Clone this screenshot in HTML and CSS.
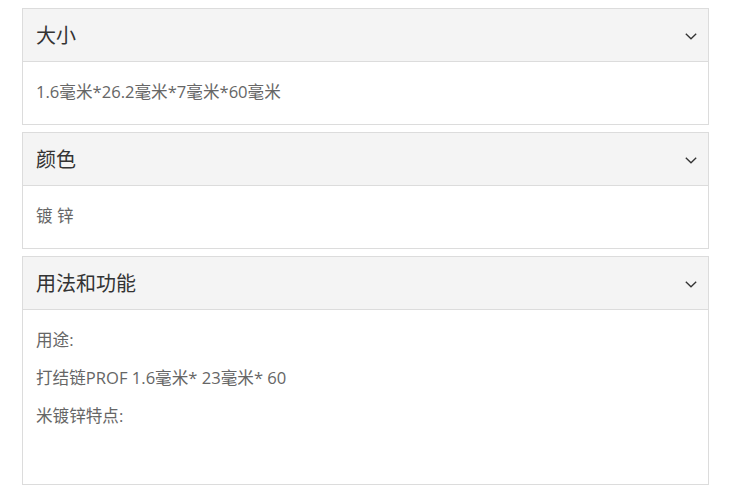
FILE: index.html
```html
<!DOCTYPE html>
<html lang="zh-CN">
<head>
<meta charset="utf-8">
<title>产品参数</title>
<link rel="stylesheet" href="styles.css">
</head>
<body>
<div class="accordion">
  <section class="panel">
    <div class="panel-head">
      <span class="panel-title">大小</span>
      <svg class="chev" width="12" height="7" viewBox="0 0 12 7"><path d="M0.8 0.8 L6 5.8 L11.2 0.8" fill="none" stroke="#333" stroke-width="1.3"/></svg>
    </div>
    <div class="panel-body">
      <p>1.6毫米*26.2毫米*7毫米*60毫米</p>
    </div>
  </section>
  <section class="panel">
    <div class="panel-head">
      <span class="panel-title">颜色</span>
      <svg class="chev" width="12" height="7" viewBox="0 0 12 7"><path d="M0.8 0.8 L6 5.8 L11.2 0.8" fill="none" stroke="#333" stroke-width="1.3"/></svg>
    </div>
    <div class="panel-body">
      <p>镀 锌</p>
    </div>
  </section>
  <section class="panel">
    <div class="panel-head">
      <span class="panel-title">用法和功能</span>
      <svg class="chev" width="12" height="7" viewBox="0 0 12 7"><path d="M0.8 0.8 L6 5.8 L11.2 0.8" fill="none" stroke="#333" stroke-width="1.3"/></svg>
    </div>
    <div class="panel-body">
      <p>用途:</p>
      <p>打结链PROF 1.6毫米* 23毫米* 60</p>
      <p>米镀锌特点:</p>
      <p class="blank">&nbsp;</p>
    </div>
  </section>
</div>
</body>
</html>
```

FILE: styles.css
```css
html, body {
  margin: 0;
  padding: 0;
  background: #fff;
}
body {
  font-family: "Open Sans", "Noto Sans CJK SC", sans-serif;
  color: #333;
}
.accordion {
  width: 687px;
  margin: 8px 0 0 22px;
  display: flex;
  flex-direction: column;
  gap: 7px;
}
.panel {
  border: 1px solid #dcdcdc;
  background: #fff;
}
.panel-head {
  height: 53px;
  background: #f4f4f4;
  border-bottom: 1px solid #dcdcdc;
  display: flex;
  align-items: center;
  justify-content: space-between;
  padding: 2px 11px 0 13px;
  box-sizing: border-box;
}
.panel-title {
  font-size: 20px;
  color: #333;
  line-height: 1;
}
.chev {
  display: block;
}
.panel-body {
  padding: 17px 13px 19px;
  color: #666;
  font-size: 16.6px;
}
.panel-body p {
  margin: 0 0 12px;
  line-height: 26px;
}
.panel-body p:last-child {
  margin-bottom: 0;
}
.panel-body p.blank {
  height: 24px;
}
```
